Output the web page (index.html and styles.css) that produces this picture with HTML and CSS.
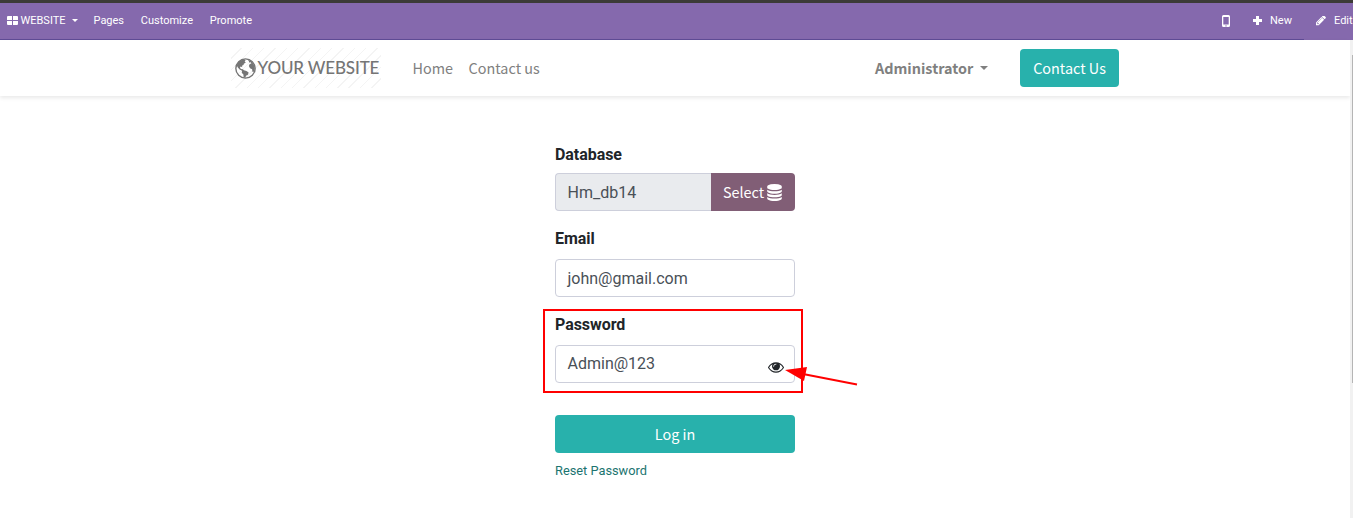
FILE: index.html
```html
<!DOCTYPE html>
<html lang="en">
<head>
<meta charset="utf-8">
<title>Login | My Website</title>
<link rel="stylesheet" href="styles.css">
</head>
<body>
<div class="topbar">
  <nav class="topbar-left">
    <a class="brand"><svg class="grid-icon" viewBox="0 0 11 9"><path d="M0 1q0-1 1-1h4v4H0zM6 0h4q1 0 1 1v3H6zM0 5h5v4H1q-1 0-1-1zM6 5h5v3q0 1-1 1H6z"/></svg><span class="brand-text">WEBSITE</span><i class="caret caret-sm"></i></a>
    <a class="pages">Pages</a><a class="customize">Customize</a><a>Promote</a>
  </nav>
  <div class="topbar-right">
    <svg class="phone-icon" viewBox="0 0 8 12"><path fill-rule="evenodd" d="M1.500 0h5Q8 0 8 1.500v9Q8 12 6.500 12h-5Q0 12 0 10.500v-9Q0 0 1.500 0zM1.300 2v7.500h5.400V2zM4 10.200a.65.65 0 1 0 .01 0z"/></svg>
    <a class="new"><svg class="plus-icon" viewBox="0 0 9 9"><path d="M3 0h3v3h3v3H6v3H3V6H0V3h3z"/></svg>New</a>
    <a class="edit"><svg class="pencil-icon" viewBox="128 256 1536 1536"><path d="M491 1536l91-91-235-235-91 91v107h128v128h107zm523-928q0-22-22-22-10 0-17 7l-542 542q-7 7-7 17 0 22 22 22 10 0 17-7l542-542q7-7 7-17zm-54-192l416 416-832 832h-416v-416zm683 96q0 53-37 90l-166 166-416-416 166-165q36-38 90-38 53 0 91 38l235 234q37 39 37 91z"/></svg>Edit</a>
  </div>
</div>
<div class="viewport">
  <div class="page">
    <header class="site-header">
      <div class="logo">
        <svg class="globe-icon" viewBox="0 0 20 20"><circle cx="10" cy="10" r="9.200" fill="none" stroke="#757575" stroke-width="1.300"/><path d="M1.500 7L3.800 3.200 8 1.200l2.200.8-1 1.300 1.100 1-1.900 1.100-.3 1.300-1.500.7.400 1.300-1.500-.7-.8.900.9 1.600 1.900.3 1 .9 2.400.6 2.100 1.400-.7 2.200-1.800 1.100-.8 2-1.500-.8-.2-2.600-1.600-1.500.3-2-2.300-1.200L2.700 9zM12.200 1.500l3.300 1.600 2.400 3.100 1 3.800-1.300 3.500-1-.5-.3-2.300-2-.9-1.100-2.200.8-1.800 1.600-.5-.7-1.200-1.400.3-.3-1.300z" fill="#757575"/></svg><span class="logo-text">YOUR WEBSITE</span>
      </div>
      <nav class="site-nav"><a class="home">Home</a><a>Contact us</a></nav>
      <a class="user"><span>Administrator</span><i class="caret"></i></a>
      <a class="btn cta">Contact Us</a>
    </header>
    <main class="login">
      <label class="label">Database</label>
      <div class="group"><div class="input readonly">Hm_db14</div><a class="btn select">Select<svg class="db-icon" viewBox="128 0 1536 1792"><path d="M896 768q237 0 443-43t325-127v170q0 69-103 128t-280 93.500-385 34.500-385-34.500-280-93.500-103-128v-170q119 84 325 127t443 43zm0 768q237 0 443-43t325-127v170q0 69-103 128t-280 93.500-385 34.500-385-34.500-280-93.500-103-128v-170q119 84 325 127t443 43zm0-384q237 0 443-43t325-127v170q0 69-103 128t-280 93.500-385 34.500-385-34.500-280-93.500-103-128v-170q119 84 325 127t443 43zm0-1152q208 0 385 34.500t280 93.500 103 128v128q0 69-103 128t-280 93.500-385 34.500-385-34.500-280-93.500-103-128v-128q0-69 103-128t280-93.500 385-34.500z"/></svg></a></div>
      <label class="label label-email">Email</label>
      <div class="input">john@gmail.com</div>
      <div class="password">
        <label class="label">Password</label>
        <div class="input input-password">Admin@123<svg class="eye-icon" viewBox="0 384 1792 1152"><path d="M1664 960q-152-236-381-353 61 104 61 225 0 185-131.500 316.500t-316.500 131.500-316.500-131.500-131.500-316.500q0-121 61-225-229 117-381 353 133 205 333.500 326.500t434.500 121.500 434.500-121.500 333.500-326.500zm-720-384q0-20-14-34t-34-14q-125 0-214.500 89.500t-89.500 214.500q0 20 14 34t34 14 34-14 14-34q0-86 61-147t147-61q20 0 34-14t14-34zm848 384q0 34-20 69-140 230-376.500 368.500t-499.500 138.500-499.500-139-376.500-368q-20-35-20-69t20-69q140-229 376.500-368t499.500-139 499.500 139 376.500 368q20 35 20 69z"/></svg></div>
        <svg class="arrow" viewBox="0 0 74 22"><path d="M18 8L72 18.500" stroke="#f00" stroke-width="2"/><path d="M0 4L22 1 19 15z" fill="#f00"/></svg>
      </div>
      <a class="btn submit">Log in</a>
      <a class="reset">Reset Password</a>
    </main>
  </div>
  <div class="scrollbar"><div class="thumb"></div></div>
</div>
</body>
</html>
```
FILE: styles.css
```css
* { box-sizing: border-box; }
body {
  margin: 0;
  height: 518px;
  overflow: hidden;
  background: #fff;
  font-family: Roboto, "Liberation Sans", sans-serif;
  color: #212529;
}
svg { display: block; flex: none; }
.topbar {
  display: flex;
  justify-content: space-between;
  height: 40px;
  border-top: 3px solid #3c3b37;
  background: linear-gradient(#5f4c96, #5f4c96) left bottom / 1304px 1px no-repeat #8569ad;
  color: #fff;
  font-size: 11px;
  line-height: 35px;
}
.topbar svg { fill: #fff; }
.topbar-left, .topbar-right, .topbar a { display: flex; align-items: center; height: 35px; white-space: nowrap; }
.topbar-left { padding-left: 7px; }
.brand { width: 86.500px; }
.grid-icon { width: 11px; height: 9px; margin: 0 2.500px 1px 0; }
.brand-text { width: 51.500px; }
.pages { width: 47.300px; }
.customize { width: 69px; }
.phone-icon { width: 8px; height: 12px; margin-right: 23px; }
.topbar .new { width: 63px; }
.plus-icon { width: 9px; height: 9px; margin: 0 8px 1px 0; }
.topbar .edit { width: 37px; }
.pencil-icon { width: 10px; height: 10px; margin-right: 8px; }
.caret {
  border: 4.500px solid transparent;
  border-top-color: currentColor;
  border-bottom: 0;
}
.caret-sm { border-width: 3px 3px 0; margin-bottom: 1px; }
.viewport { display: flex; height: 478px; }
.page { flex: 1; }
.scrollbar { width: 3px; padding: 15px 0 0 2px; background: #f1f1f1; }
.thumb { height: 328px; background: #b5b5b5; }
.site-header {
  display: flex;
  align-items: center;
  height: 56px;
  padding-left: 231px;
  box-shadow: 0 2px 4px rgba(0, 0, 0, .09);
  font-family: "Noto Sans CJK SC", sans-serif;
  font-size: 14.400px;
  color: #808080;
  white-space: nowrap;
}
.logo {
  display: flex;
  align-items: center;
  width: 150px;
  height: 40px;
  padding-left: 4px;
  background: repeating-linear-gradient(135deg, #fff 0 7px, #f4f4f4 7px 8px);
}
.globe-icon { width: 21px; height: 21px; margin-right: 1.500px; }
.logo-text { font: 500 17px/38px Lato, sans-serif; letter-spacing: -.15px; color: #757575; padding-bottom: 1px; }
.site-nav { display: flex; width: 494px; padding: 0 0 2px 31.600px; }
.home { width: 56px; }
.user { display: flex; align-items: center; gap: 7px; width: 145px; padding-bottom: 1px; font-weight: 700; }
.btn {
  display: flex;
  align-items: center;
  justify-content: center;
  height: 38px;
  border-radius: 4px;
  background: #28b1ac;
  color: #fff;
  font: 400 14.400px/24px "Noto Sans CJK SC", sans-serif;
}
.cta { width: 99px; }
.login { display: flex; flex-direction: column; width: 240px; margin: 46px 0 0 555px; }
.label { height: 31px; font-size: 16px; font-weight: 700; line-height: 26px; letter-spacing: -.05px; }
.label-email { height: 33px; margin-top: 15px; }
.group { display: flex; }
.input {
  height: 38px;
  padding: 0 12px 0 11.500px;
  border: 1px solid #cdcfdb;
  border-radius: 4px;
  font-size: 16px;
  line-height: 38px;
  color: #495057;
}
.readonly { flex: 1; border-right: 0; border-radius: 4px 0 0 4px; background: #e9ebee; }
.select { width: 84px; gap: 3px; padding-right: 1px; border-radius: 0 4px 4px 0; background: #815e76; }
.db-icon { width: 15px; height: 17px; fill: #fff; }
.password {
  position: relative;
  display: flex;
  flex-direction: column;
  width: 260px;
  height: 84px;
  margin: 12px 0 0 -12px;
  padding: 0 6px 0 10px;
  border: 2px solid #f00;
}
.password .label { height: 34px; padding-top: 1px; }
.input-password { display: flex; justify-content: space-between; line-height: 36px; padding-right: 10px; }
.eye-icon { width: 16px; height: 11px; margin-top: 16px; fill: #212529; }
.arrow { position: absolute; left: 240px; top: 55px; width: 74px; height: 22px; }
.submit { margin-top: 22px; }
.reset { margin-top: 8px; font-size: 12.800px; line-height: 20px; color: #1b746f; }
```
